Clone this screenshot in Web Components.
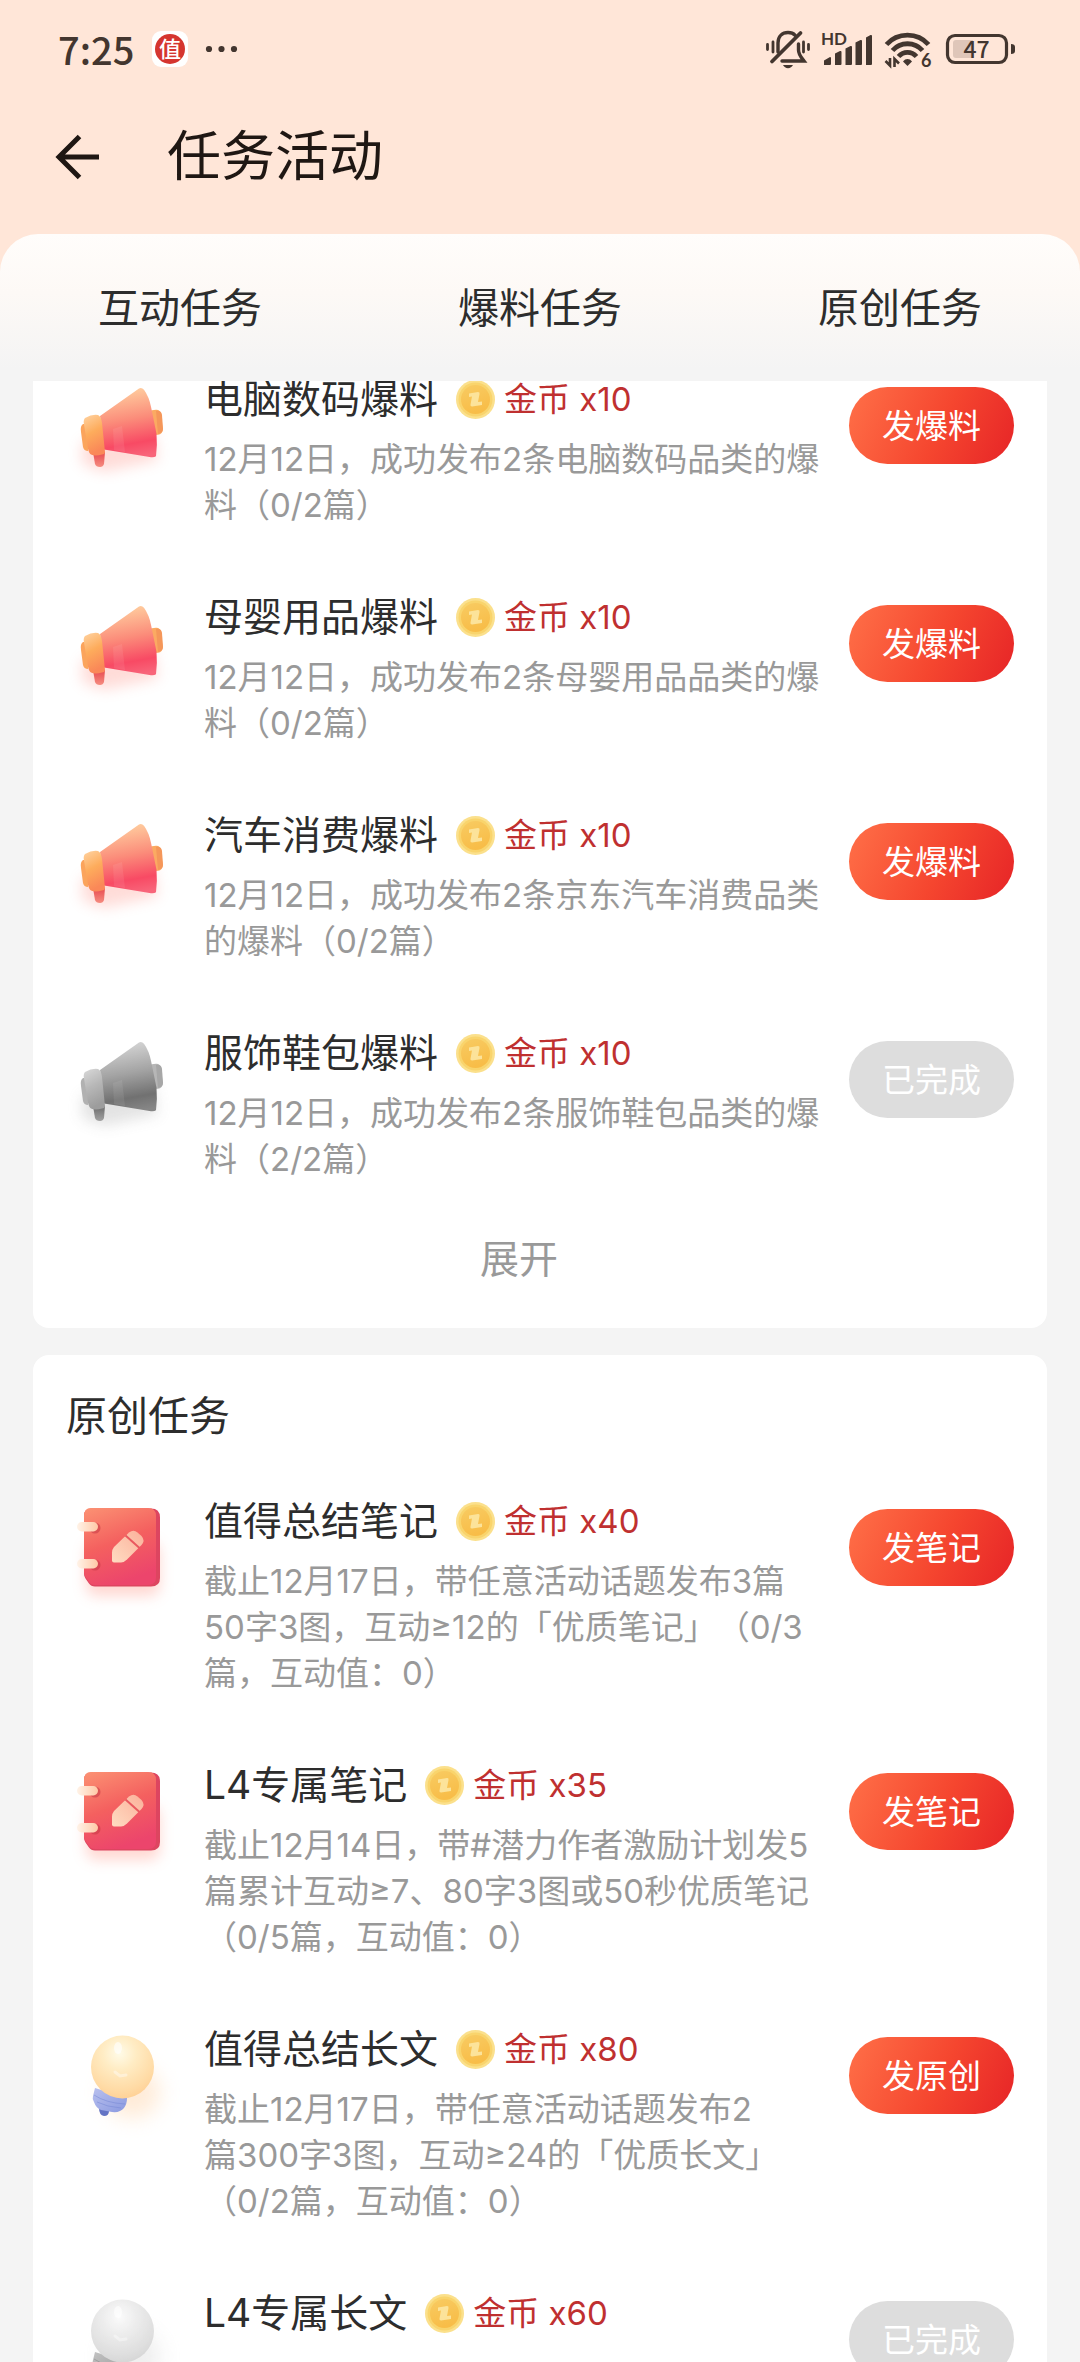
<!DOCTYPE html>
<html lang="zh-CN">
<head>
<meta charset="utf-8">
<meta name="viewport" content="width=device-width, initial-scale=1">
<title>任务活动</title>
<style>
  html, body { margin: 0; height: 100%; }
  body { font-family: Inter, "Noto Sans CJK SC", sans-serif; color: #2d2d2d; background: #f4f4f4; }
</style>
</head>
<body>
<task-app>
  <status-bar slot="top" time="7:25" battery="47"></status-bar>
  <page-header slot="top">任务活动</page-header>
  <tab-bar slot="tabs">
    <tab-button>互动任务</tab-button>
    <tab-button>爆料任务</tab-button>
    <tab-button>原创任务</tab-button>
  </tab-bar>

  <task-card continued>
    <task-item icon="horn" name="电脑数码爆料" coins="10" action="发爆料">12月12日，成功发布2条电脑数码品类的爆<br>料（0/2篇）</task-item>
    <task-item icon="horn" name="母婴用品爆料" coins="10" action="发爆料">12月12日，成功发布2条母婴用品品类的爆<br>料（0/2篇）</task-item>
    <task-item icon="horn" name="汽车消费爆料" coins="10" action="发爆料">12月12日，成功发布2条京东汽车消费品类<br>的爆料（0/2篇）</task-item>
    <task-item icon="horn" name="服饰鞋包爆料" coins="10" action="已完成" done>12月12日，成功发布2条服饰鞋包品类的爆<br>料（2/2篇）</task-item>
    <expand-button slot="footer">展开</expand-button>
  </task-card>

  <task-card heading="原创任务">
    <task-item icon="book" name="值得总结笔记" coins="40" action="发笔记">截止12月17日，带任意活动话题发布3篇<br>50字3图，互动≥12的「优质笔记」（0/3<br>篇，互动值：0）</task-item>
    <task-item icon="book" name="L4专属笔记" coins="35" action="发笔记">截止12月14日，带#潜力作者激励计划发5<br>篇累计互动≥7、80字3图或50秒优质笔记<br>（0/5篇，互动值：0）</task-item>
    <task-item icon="bulb" name="值得总结长文" coins="80" action="发原创">截止12月17日，带任意活动话题发布2<br>篇300字3图，互动≥24的「优质长文」<br>（0/2篇，互动值：0）</task-item>
    <task-item icon="bulb" name="L4专属长文" coins="60" action="已完成" done></task-item>
  </task-card>
</task-app>

<script>
const define = (name, render) => customElements.define(name, class extends HTMLElement {
  constructor() { super(); this.attachShadow({ mode: 'open' }); }
  connectedCallback() { this.shadowRoot.innerHTML = render(this); }
});

define('task-app', () => `
  <style>
    :host { display: flex; flex-direction: column; height: 100vh; overflow: hidden; }
    header { background: #ffe6d8; flex: none; }
    main { flex: 1; min-height: 0; overflow: hidden; padding: 0 33px; display: flex; flex-direction: column; gap: 27px; }
  </style>
  <header><slot name="top"></slot><slot name="tabs"></slot></header>
  <main><slot></slot></main>`);

define('status-bar', el => `
  <style>
    :host { display: flex; justify-content: space-between; align-items: center; height: 98px; padding: 0 65px 0 58px; color: #43362f; font-family: "Noto Sans CJK SC", sans-serif; }
    .left, .right { display: flex; align-items: center; }
    .right { gap: 11px; }
    time { font-size: 38px; line-height: 56px; font-weight: 500; }
    .app { width: 36px; height: 36px; margin: 0 17px 0 18px; }
    svg { display: block; flex: none; overflow: visible; }
    text { font-family: "Noto Sans CJK SC", sans-serif; fill: #43362f; }
    .latin { font-family: Lato, sans-serif; }
  </style>
  <div class="left">
    <time>${el.getAttribute('time')}</time>
    <svg class="app" viewBox="0 0 36 36">
      <rect width="36" height="36" rx="9" fill="#fff"/>
      <circle cx="18" cy="18" r="15" fill="#d5352f"/>
      <text x="18" y="26" text-anchor="middle" style="font-size:22px;fill:#fff;font-weight:500">值</text>
    </svg>
    <svg width="34" height="10" viewBox="0 0 34 10" fill="#43362f"><circle cx="4" cy="5" r="3.1"/><circle cx="16.500" cy="5" r="3.1"/><circle cx="29" cy="5" r="3.1"/></svg>
  </div>
  <div class="right">
    <svg width="46" height="40" viewBox="65 29 46 40" fill="none" stroke="#43362f" stroke-width="3.400" stroke-linecap="round">
      <path d="M78 52V43c0-7 4.500-10.500 10-10.500 3 0 5.500 1 7.200 2.800"/>
      <path d="M98.500 44v6c0 4.500 2 6.500 5.500 11H82"/>
      <path d="M72 61.500L100.500 33" stroke-width="3.800"/>
      <path d="M83 65h10c-1 2-2.800 3.200-5 3.200s-4-1.200-5-3.200z" fill="#43362f" stroke="none"/>
      <path d="M67.500 44.500v5M73 42v10M103.500 42v10M108.500 44.500v5" stroke-width="2.800"/>
    </svg>
    <svg width="51" height="40" viewBox="122 29 51 40" fill="#43362f">
      <text class="latin" x="121" y="45" style="font-size:17px;font-weight:700">HD</text>
      <path d="M124 65v-4.500l6-3.500q1 0 1 1v6q0 1-1 1zM135 65V53.500l5-2.500q1.500-.5 1.500 1V64q0 1-1 1zM145.500 65V48.500l5-2.500q1.500-.5 1.500 1V64q0 1-1 1zM155.500 65V42.500l5-2.500q1.500-.5 1.500 1V64q0 1-1 1zM166 65V37.500l4.500-2.500q1.500-.5 1.500 1V64q0 1-1 1z"/>
    </svg>
    <svg width="48" height="40" viewBox="184 29 48 40" fill="none" stroke="#43362f" stroke-width="4.800">
      <path d="M186.500 44.500c11-12.500 31-12.500 42 0"/>
      <path d="M192.500 50.500c8-9 22-9 30 0"/>
      <path d="M198.500 56.500c5-5.500 13-5.500 18 0"/>
      <path d="M203 61.500c2.500-3.300 6.500-3.300 9 0l-4.500 4.500z" fill="#43362f" stroke="none"/>
      <path d="M185.500 61l4.500 4.500V58M194.500 67v-8l4.500 4.500" stroke-width="2.600"/>
      <text class="latin" x="221" y="67" style="font-size:18px;font-weight:700" stroke="none">6</text>
    </svg>
    <svg width="72" height="40" viewBox="243 29 72 40">
      <rect x="247.500" y="35.500" width="59" height="27" rx="7.500" fill="none" stroke="#43362f" stroke-width="3.200"/>
      <path d="M256 40h17v18h-17q-3 0-3-3V43q0-3 3-3z" fill="#dfc6b9"/>
      <path d="M311 44q4 0 4 3v4q0 3-4 3z" fill="#43362f"/>
      <text x="276.500" y="58" text-anchor="middle" style="font-size:23px;font-weight:500">${el.getAttribute('battery')}</text>
    </svg>
  </div>`);

define('page-header', () => `
  <style>
    :host { display: flex; align-items: center; height: 118px; padding: 0 55px 18px; }
    button { border: 0; background: none; padding: 0; margin-right: 67px; }
    svg { display: block; }
    h1 { margin: 0; font-size: 54px; line-height: 80px; font-weight: 400; color: #1f1713; }
  </style>
  <button type="button" aria-label="返回">
    <svg width="45" height="46" viewBox="0 0 45 46" fill="none" stroke="#1f1713" stroke-width="5"><path d="M24.500 2.500L4 23l20.500 20.500M4 23h40"/></svg>
  </button>
  <h1><slot></slot></h1>`);

define('tab-bar', () => `
  <style>
    :host { display: flex; height: 147px; border-radius: 38px 38px 0 0; background: linear-gradient(#fffdfb, #fdf9f6 40%, #f4f4f4 92%); }
    ::slotted(*) { flex: 1; }
  </style>
  <slot></slot>`);

define('tab-button', () => `
  <style>
    :host { display: flex; }
    button { flex: 1; border: 0; background: none; padding: 0; font: inherit; font-size: 41px; line-height: 58px; color: #2d2d2d; }
  </style>
  <button type="button"><slot></slot></button>`);

define('task-card', el => {
  const heading = el.getAttribute('heading');
  return `
  <style>
    :host { display: block; flex: none; background: #fff; border-radius: 16px; padding: 32px 33px 40px 27px; }
    :host([continued]) { padding-top: 0; margin-top: -11px; border-radius: 0 0 16px 16px; }
    h2 { margin: 0 0 47px 6px; font-size: 41px; line-height: 58px; font-weight: 400; }
    .list { display: flex; flex-direction: column; gap: 60px; }
    ::slotted(expand-button) { margin-top: 48px; }
  </style>
  ${heading ? `<h2>${heading}</h2>` : ''}
  <div class="list"><slot></slot></div>
  <slot name="footer"></slot>`;
});

define('expand-button', () => `
  <style>
    :host { display: flex; justify-content: center; }
    button { border: 0; background: none; padding: 0 36px 0 0; margin: 0; font: inherit; font-size: 39px; line-height: 58px; color: #999; }
  </style>
  <button type="button"><slot></slot></button>`);

const ART = {
  horn: `
    <defs>
      <linearGradient id="cone" x1=".45" y1="0" x2=".6" y2="1"><stop offset="0" stop-color="#ffd0a0"/><stop offset=".45" stop-color="#fb8c7a"/><stop offset=".8" stop-color="#f84a64"/><stop offset="1" stop-color="#f8657a"/></linearGradient>
      <linearGradient id="cap" x1="0" y1="0" x2=".3" y2="1"><stop offset="0" stop-color="#ffd3a2"/><stop offset=".5" stop-color="#fdac5c"/><stop offset="1" stop-color="#fa8858"/></linearGradient>
      <linearGradient id="grip" x1="0" y1="0" x2="0" y2="1"><stop offset="0" stop-color="#e84a50"/><stop offset="1" stop-color="#f58c80"/></linearGradient>
      <filter id="soft" x="-40%" y="-40%" width="180%" height="180%"><feGaussianBlur stdDeviation="7"/></filter>
    </defs>
    <path d="M22 72L92 58l6 32-54 12-22-8z" fill="#ff8c80" opacity=".3" filter="url(#soft)"/>
    <path d="M33 82h12l-1 12q-1 3-4 3-4 0-5-3z" fill="url(#grip)"/>
    <rect x="88" y="40" width="14" height="25" rx="5" transform="rotate(-5 95 52)" fill="#fbaa62"/>
    <path d="M96 41q5-1 6 4l1 14q0 4-5 5z" fill="#f5975a"/>
    <path d="M40 46L79 18.500q2.500-1.500 5 1.200 5 7 7 17l5.500 27q1 12-.5 22.500-2 1.500-5 1L44 79.500z" fill="url(#cone)"/>
    <path d="M53 59l9-3 3 26-11-2z" fill="#fff" opacity=".08"/>
    <path d="M23 54q-3 2-2 8l2 15q1 4 5 4l3-27z" fill="#fba45c"/>
    <path d="M25 48q7-4 13-3 3 1 4 8l3 29q0 2-3 2.500-7 2-11 0-2-1-3-6l-4-24q-1-4 1-6.500z" fill="url(#cap)"/>`,
  book: `
    <defs>
      <linearGradient id="cover" x1=".1" y1="0" x2=".45" y2="1"><stop offset="0" stop-color="#fb8f72"/><stop offset=".5" stop-color="#f4605f"/><stop offset="1" stop-color="#ec456c"/></linearGradient>
      <linearGradient id="pen" x1="1" y1="0" x2="0" y2="1"><stop offset="0" stop-color="#fbb09a"/><stop offset="1" stop-color="#ffdcc2"/></linearGradient>
      <linearGradient id="ring" x1="0" y1="0" x2="1" y2="0"><stop offset="0" stop-color="#fff3e8"/><stop offset="1" stop-color="#ffc9a6"/></linearGradient>
      <filter id="soft" x="-40%" y="-40%" width="180%" height="180%"><feGaussianBlur stdDeviation="7"/></filter>
    </defs>
    <rect x="26" y="50" width="74" height="54" rx="10" fill="#ff8c7c" opacity=".34" filter="url(#soft)"/>
    <path d="M31 16.500h60q9 0 9 9V86q0 8.500-9 8.500H35q-4 0-6-3l-3.500-5q-1.500-2-1.500-5V24q0-7.500 7-7.500z" fill="#dd4560"/>
    <path d="M31 16h57q8 0 8 8v61q0 8-8 8H35q-4 0-6-3l-3.500-5q-1.500-2-1.500-5V24q0-8 7-8z" fill="url(#cover)"/>
    <circle cx="35" cy="36" r="5.500" fill="#c93c48" opacity=".6"/><circle cx="35" cy="73" r="5.500" fill="#c93c48" opacity=".6"/>
    <rect x="17" y="30" width="21" height="9.500" rx="4.700" fill="url(#ring)"/>
    <rect x="17" y="67" width="21" height="9.500" rx="4.700" fill="url(#ring)"/>
    <path d="M69 40.500q4.500-3.500 8.500 0l4 3.500q4 4.500 0 9L67 67.500q-3 3-6 3h-7q-2 0-2-2v-8q0-3 2-5.500z" fill="url(#pen)"/>
    <path d="M65.500 43.500L79.500 56" stroke="#e9595f" stroke-width="2"/>`,
  bulb: `
    <defs>
      <radialGradient id="glass" cx=".45" cy=".28" r=".75"><stop offset="0" stop-color="#fffbe8"/><stop offset=".35" stop-color="#ffecc4"/><stop offset=".8" stop-color="#ffdaa4"/><stop offset="1" stop-color="#ffcf94"/></radialGradient>
      <linearGradient id="base" x1="0" y1="0" x2="1" y2="1"><stop offset="0" stop-color="#b9c0ee"/><stop offset="1" stop-color="#8a99e0"/></linearGradient>
      <filter id="soft" x="-50%" y="-50%" width="200%" height="200%"><feGaussianBlur stdDeviation="10"/></filter>
    </defs>
    <ellipse cx="72" cy="72" rx="28" ry="26" fill="#ffc68e" opacity=".34" filter="url(#soft)"/>
    <path d="M39 88l10 3q0 5-5 5-5-1-5-8z" fill="#6474c4"/>
    <path d="M35 68l32 10q0 6-3 10-4 5-12 4l-11-2q-5-2-7-8-2-3-1-6z" fill="url(#base)"/>
    <path d="M34 75q12 8 31 9M37 82q10 5 24 6" stroke="#7485d4" stroke-width="1" fill="none" opacity=".5"/>
    <circle cx="62.500" cy="47" r="31.500" fill="url(#glass)"/>
    <path d="M55 52l5 4 6-1" stroke="#fff" stroke-width="3" fill="none" opacity=".4" stroke-linecap="round"/>
    <ellipse cx="58" cy="28" rx="4" ry="6" fill="#fff" opacity=".6"/>`
};

define('task-art', el => `
  <style>
    :host { display: block; width: 120px; height: 120px; flex: none; }
    :host([muted]) { filter: grayscale(1); }
    svg { display: block; overflow: visible; }
  </style>
  <svg width="120" height="120" viewBox="0 0 120 120" aria-hidden="true">${ART[el.getAttribute('kind')]}</svg>`);

define('coin-reward', el => `
  <style>
    :host { display: flex; align-items: center; gap: 9px; font-size: 33px; line-height: 58px; color: #bf3030; }
    svg { display: block; flex: none; }
  </style>
  <svg width="39" height="39" viewBox="0 0 39 39" aria-hidden="true">
    <defs><linearGradient id="face" x1="0" y1="0" x2=".3" y2="1"><stop offset="0" stop-color="#f8cb62"/><stop offset="1" stop-color="#f8bd48"/></linearGradient></defs>
    <circle cx="19.500" cy="19.500" r="19.500" fill="#fbe08c"/>
    <circle cx="19.500" cy="19.500" r="17" fill="#f9d46c"/>
    <circle cx="19.500" cy="19.500" r="14.500" fill="url(#face)"/>
    <path d="M13 13.500l9-1.500q2 0 1.500 2l-1.500 8 4-.5v3.500l-10 1.500q-2 0-1.500-2l1.500-8-3 .5z" fill="#fce39a"/>
  </svg>
  <span>金币 x${el.getAttribute('amount')}</span>`);

define('task-item', el => {
  const done = el.hasAttribute('done');
  return `
  <style>
    :host { display: flex; align-items: flex-start; }
    .body { flex: 1; min-width: 0; margin: 0 12px 0 24px; }
    .head { display: flex; align-items: center; gap: 18px; margin-bottom: 8px; }
    h3 { margin: 0; font-size: 39px; line-height: 58px; font-weight: 400; }
    p { margin: 0; font-size: 33px; line-height: 46px; color: #999; text-spacing-trim: space-all; }
    button { flex: none; width: 165px; height: 77px; margin: 17px 0 0; padding: 0; border: 0; border-radius: 39px; font: inherit; font-size: 33px; line-height: 46px; color: #fff; background: linear-gradient(115deg, #ff7048, #f5462f 55%, #e62427); }
    button:disabled { background: #ddd; }
  </style>
  <task-art kind="${el.getAttribute('icon')}"${done ? ' muted' : ''}></task-art>
  <div class="body">
    <div class="head"><h3>${el.getAttribute('name')}</h3><coin-reward amount="${el.getAttribute('coins')}"></coin-reward></div>
    <p><slot></slot></p>
  </div>
  <button type="button"${done ? ' disabled' : ''}>${el.getAttribute('action')}</button>`;
});
</script>
</body>
</html>
